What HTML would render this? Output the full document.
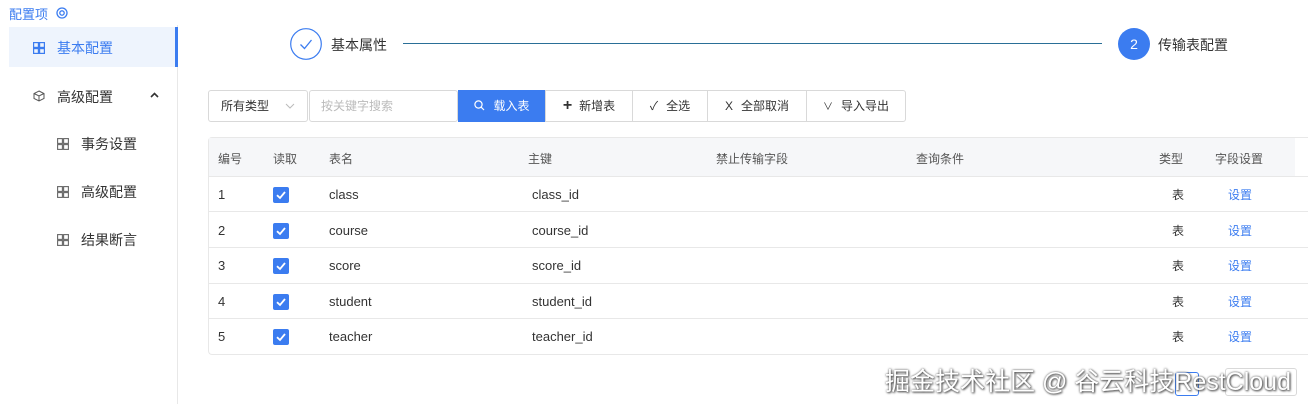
<!DOCTYPE html>
<html><head><meta charset="utf-8"><style>
*{box-sizing:border-box;margin:0;padding:0}
body{width:1308px;height:404px;background:#fff;font-family:"Liberation Sans","Noto Sans CJK SC",sans-serif;color:#333;position:relative;overflow:hidden;font-size:13px}
.a{position:absolute;white-space:nowrap}
.grid{position:absolute;width:12px;height:12px}
.cb{position:absolute;width:16px;height:16px;background:#3b7cf0;border-radius:2px}
.btn{position:absolute;top:90px;height:32px;border:1px solid #d9d9d9;background:#fff;font-size:12px;line-height:30px;text-align:center;color:#333}
.row{position:absolute;left:208px;width:1100px;height:1px;background:#e8e8e8}
</style></head><body>
<div class="a" style="left:9px;top:4px;color:#3b7cf0;font-size:13px">配置项</div>
<svg class="a" style="left:56px;top:7px" width="12" height="12" viewBox="0 0 12 12"><circle cx="6" cy="6" r="5" fill="none" stroke="#3b7cf0" stroke-width="1.3"/><circle cx="6" cy="6" r="2.2" fill="none" stroke="#3b7cf0" stroke-width="1.3"/></svg>
<div class="a" style="left:177px;top:25px;width:1px;height:379px;background:#e8e8e8"></div>
<div class="a" style="left:9px;top:27px;width:169px;height:40px;background:#eef4fd;border-right:3px solid #3b7cf0"></div>
<svg class="grid" style="left:33px;top:42px" viewBox="0 0 12 12"><g fill="none" stroke="#3b7cf0" stroke-width="1.2"><rect x="0.6" y="0.6" width="4.8" height="4.8"/><rect x="6.6" y="0.6" width="4.8" height="4.8"/><rect x="0.6" y="6.6" width="4.8" height="4.8"/><rect x="6.6" y="6.6" width="4.8" height="4.8"/></g></svg>
<div class="a" style="left:57px;top:38px;font-size:14px;color:#3b7cf0">基本配置</div>
<svg class="a" style="left:33px;top:90px" width="12" height="12" viewBox="0 0 12 12"><g fill="none" stroke="#555" stroke-width="1"><path d="M6 1L11 3.5V8.5L6 11L1 8.5V3.5Z"/><path d="M1 3.5L6 6L11 3.5M6 6V11"/></g></svg>
<div class="a" style="left:57px;top:87px;font-size:14px">高级配置</div>
<svg class="a" style="left:150px;top:92px" width="9" height="6" viewBox="0 0 9 6"><path d="M1 5L4.5 1.5L8 5" fill="none" stroke="#333" stroke-width="1.6"/></svg>
<svg class="grid" style="left:57px;top:138px" viewBox="0 0 12 12"><g fill="none" stroke="#666" stroke-width="1.1"><rect x="0.6" y="0.6" width="4.8" height="4.8"/><rect x="6.6" y="0.6" width="4.8" height="4.8"/><rect x="0.6" y="6.6" width="4.8" height="4.8"/><rect x="6.6" y="6.6" width="4.8" height="4.8"/></g></svg>
<div class="a" style="left:81px;top:134px;font-size:14px">事务设置</div>
<svg class="grid" style="left:57px;top:186px" viewBox="0 0 12 12"><g fill="none" stroke="#666" stroke-width="1.1"><rect x="0.6" y="0.6" width="4.8" height="4.8"/><rect x="6.6" y="0.6" width="4.8" height="4.8"/><rect x="0.6" y="6.6" width="4.8" height="4.8"/><rect x="6.6" y="6.6" width="4.8" height="4.8"/></g></svg>
<div class="a" style="left:81px;top:182px;font-size:14px">高级配置</div>
<svg class="grid" style="left:57px;top:234px" viewBox="0 0 12 12"><g fill="none" stroke="#666" stroke-width="1.1"><rect x="0.6" y="0.6" width="4.8" height="4.8"/><rect x="6.6" y="0.6" width="4.8" height="4.8"/><rect x="0.6" y="6.6" width="4.8" height="4.8"/><rect x="6.6" y="6.6" width="4.8" height="4.8"/></g></svg>
<div class="a" style="left:81px;top:230px;font-size:14px">结果断言</div>

<svg class="a" style="left:290px;top:28px" width="32" height="32" viewBox="0 0 32 32"><circle cx="16" cy="16" r="15.3" fill="none" stroke="#3b7cf0" stroke-width="1.2"/><path d="M10.5 16.5L14.5 20.5L21.5 12" fill="none" stroke="#3b7cf0" stroke-width="1.3"/></svg>
<div class="a" style="left:331px;top:35px;font-size:14px">基本属性</div>
<div class="a" style="left:403px;top:43px;width:699px;height:1px;background:#2a6f97"></div>
<div class="a" style="left:1118px;top:28px;width:32px;height:32px;border-radius:50%;background:#3b7cf0;color:#fff;text-align:center;line-height:32px;font-size:14px">2</div>
<div class="a" style="left:1158px;top:35px;font-size:14px">传输表配置</div>

<div class="btn" style="left:208px;width:100px;border-radius:3px;text-align:left;padding-left:12px">所有类型<svg class="a" style="left:76px;top:12px" width="10" height="6" viewBox="0 0 10 6"><path d="M1 1L5 5L9 1" fill="none" stroke="#bbb"/></svg></div>
<div class="btn" style="left:309px;width:149px;border-radius:3px;text-align:left;padding-left:11px;color:#bbb">按关键字搜索</div>
<div class="btn" style="left:458px;width:88px;background:#3b7cf0;border-color:#3b7cf0;color:#fff">
<svg style="vertical-align:-1px;margin-right:8px" width="11" height="11" viewBox="0 0 11 11"><circle cx="4.5" cy="4.5" r="3.6" fill="none" stroke="#fff" stroke-width="1.2"/><path d="M7.2 7.2L10 10" stroke="#fff" stroke-width="1.2"/></svg>载入表</div>
<div class="btn" style="left:545px;width:88px"><b style="font-size:16px;margin-right:7px">+</b>新增表</div>
<div class="btn" style="left:632px;width:76px"><span style="margin-right:8px">✓</span>全选</div>
<div class="btn" style="left:707px;width:100px"><span style="margin-right:8px">X</span>全部取消</div>
<div class="btn" style="left:806px;width:100px;border-radius:0 3px 3px 0"><span style="margin-right:8px;font-size:10px">∨</span>导入导出</div>

<div class="a" style="left:208px;top:137px;width:1100px;height:218px;border:1px solid #e8e8e8;border-right:none;border-radius:4px 0 0 4px"></div>
<div class="a" style="left:209px;top:138px;width:1086px;height:38px;background:#f6f7f9"></div>
<div class="row" style="top:176px"></div><div class="row" style="top:211px"></div><div class="row" style="top:247px"></div><div class="row" style="top:283px"></div><div class="row" style="top:318px"></div>
<div class="a" style="top:150px;left:218px;font-size:12px;color:#555">编号</div>
<div class="a" style="top:150px;left:273px;font-size:12px;color:#555">读取</div>
<div class="a" style="top:150px;left:329px;font-size:12px;color:#555">表名</div>
<div class="a" style="top:150px;left:528px;font-size:12px;color:#555">主键</div>
<div class="a" style="top:150px;left:716px;font-size:12px;color:#555">禁止传输字段</div>
<div class="a" style="top:150px;left:916px;font-size:12px;color:#555">查询条件</div>
<div class="a" style="top:150px;left:1159px;font-size:12px;color:#555">类型</div>
<div class="a" style="top:150px;left:1215px;font-size:12px;color:#555">字段设置</div>

<div id="rows"></div>
<script>
var d=[["1","class"],["2","course"],["3","score"],["4","student"],["5","teacher"]],h="";
d.forEach(function(r,i){var y=186+i*35.6;
h+='<div class="a" style="top:'+(y+1)+'px;left:218px">'+r[0]+'</div>'+
'<div class="cb" style="top:'+(y+1)+'px;left:273px"><svg width="16" height="16" viewBox="0 0 16 16"><path d="M4 8.2L7 11L12 5" fill="none" stroke="#fff" stroke-width="1.8"/></svg></div>'+
'<div class="a" style="top:'+(y+1)+'px;left:329px">'+r[1]+'</div>'+
'<div class="a" style="top:'+(y+1)+'px;left:532px">'+r[1]+'_id</div>'+
'<div class="a" style="top:'+y+'px;left:1172px;font-size:12px">表</div>'+
'<div class="a" style="top:'+y+'px;left:1228px;font-size:12px;color:#3b7cf0">设置</div>';});
document.getElementById('rows').innerHTML=h;
</script>
<div class="a" style="left:1175px;top:372px;width:24px;height:24px;border:1px solid #3b7cf0;border-radius:3px"></div>
<div class="a" style="left:1225px;top:368px;width:72px;height:28px;border:1px solid #d9d9d9;border-radius:3px"></div>
<div class="a" style="left:885px;top:362px;font-size:25px;color:#fff;text-shadow:0 0 2px #555,1px 1px 2px #444">掘金技术社区 @ 谷云科技RestCloud</div>
</body></html>
